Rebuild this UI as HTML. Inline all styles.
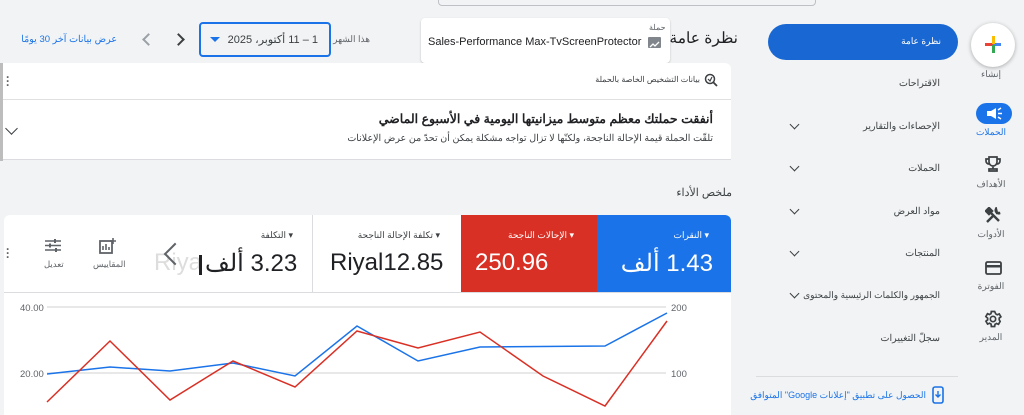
<!DOCTYPE html>
<html><head><meta charset="utf-8"><style>
*{margin:0;padding:0;box-sizing:border-box}
body{width:1024px;height:409px;overflow:hidden;background:#f1f3f4;font-family:"Liberation Sans","Noto Sans CJK SC",sans-serif;color:#202124;position:relative}
.a{position:absolute;white-space:nowrap}
.r{direction:rtl}
.nav{font-size:9.5px;color:#3c4043}
.rl{font-size:9px;color:#5f6368;text-align:center;width:60px;right:3px}
.chev{position:absolute;width:7px;height:7px;border-right:1.5px solid #3c4043;border-bottom:1.5px solid #3c4043;transform:rotate(45deg)}
</style></head><body>

<div class="a" style="left:438px;top:-10px;width:378px;height:16px;border:1px solid #bdc1c6;border-radius:4px;background:#f1f3f4"></div>

<div class="a" style="left:421px;top:18px;width:249px;height:45px;background:#fff;border-radius:4px;box-shadow:0 1px 2px rgba(0,0,0,.2)"></div>
<div class="a" style="left:649px;top:23px;font-size:8px;color:#5f6368">حملة</div>
<div class="a" style="left:428px;top:36px;font-size:11px;color:#202124">Sales-Performance Max-TvScreenProtector</div>
<div class="a" style="left:648px;top:37px;width:13px;height:11px;background:#80868b;border-radius:1px"><svg width="13" height="11"><path d="M2 8 L5 5 L7 7 L11 3" stroke="#fff" stroke-width="1.3" fill="none"/></svg></div>
<div class="a r" style="right:286px;top:29px;font-size:15.5px;color:#202124">نظرة عامة</div>

<div class="a r" style="right:654px;top:34px;font-size:9px;color:#5f6368">هذا الشهر</div>
<div class="a" style="left:199px;top:22px;width:132px;height:35px;border:2px solid #1a73e8;border-radius:4px"></div>
<div class="a r" style="right:706px;top:33px;font-size:11px;color:#3c4043">1 – 11 أكتوبر، 2025</div>
<div class="a" style="left:210px;top:37px;width:0;height:0;border-left:5px solid transparent;border-right:5px solid transparent;border-top:5px solid #1a73e8"></div>
<div class="a" style="left:174px;top:35px;width:9px;height:9px;border-right:2px solid #3c4043;border-top:2px solid #3c4043;transform:rotate(45deg)"></div>
<div class="a" style="left:144px;top:35px;width:9px;height:9px;border-left:2px solid #9aa0a6;border-bottom:2px solid #9aa0a6;transform:rotate(45deg)"></div>
<div class="a r" style="right:907px;top:34px;font-size:9.5px;color:#1a73e8">عرض بيانات آخر 30 يومًا</div>

<div class="a" style="left:0;top:63px;width:731px;height:97px;background:#fff;border-radius:0 6px 0 0;border-bottom:1px solid #dadce0"></div>
<div class="a" style="left:0;top:63px;width:3px;height:98px;background:#bdbdbd"></div>
<div class="a" style="left:3px;top:99px;width:728px;height:1px;background:#e0e0e0"></div>
<div class="a" style="left:6px;top:75px;font-size:12px;line-height:4px;color:#5f6368;font-weight:bold">·<br>·<br>·</div>
<svg class="a" style="left:704px;top:73px" width="15" height="15"><circle cx="6" cy="6" r="4.5" stroke="#3c4043" stroke-width="1.5" fill="none"/><path d="M9.5 9.5 L13 13" stroke="#3c4043" stroke-width="1.8"/><path d="M4 6 L6 8 L8 4" stroke="#3c4043" stroke-width="1.2" fill="none"/></svg>
<div class="a r" style="right:324px;top:75px;font-size:8px;color:#3c4043">بيانات التشخيص الخاصة بالحملة</div>
<div class="a r" style="right:311px;top:111px;font-size:12.5px;font-weight:bold;color:#202124">أنفقت حملتك معظم متوسط ميزانيتها اليومية في الأسبوع الماضي</div>
<div class="a r" style="right:311px;top:133px;font-size:9.5px;color:#3c4043">تلقّت الحملة قيمة الإحالة الناجحة، ولكنّها لا تزال تواجه مشكلة يمكن أن تحدّ من عرض الإعلانات</div>
<div class="chev" style="left:7px;top:124px;width:9px;height:9px"></div>

<div class="a r" style="right:292px;top:186px;font-size:11px;color:#3c4043">ملخص الأداء</div>

<div class="a" style="left:4px;top:215px;width:727px;height:200px;background:#fff;border-radius:6px 6px 0 0"></div>
<div class="a" style="left:597px;top:215px;width:134px;height:77px;background:#1a73e8;border-radius:0 6px 0 0"></div>
<div class="a" style="left:461px;top:215px;width:136px;height:77px;background:#d93025"></div>
<div class="a" style="left:312px;top:215px;width:1px;height:77px;background:#dadce0"></div>
<div class="a" style="left:4px;top:292px;width:727px;height:1px;background:#dadce0"></div>

<div class="a r" style="right:315px;top:230px;font-size:9px;color:#fff">▾ النقرات</div>
<div class="a r" style="right:311px;top:249px;font-size:24px;color:#fff">1.43 ألف</div>
<div class="a r" style="right:450px;top:230px;font-size:9px;color:#fff">▾ الإحالات الناجحة</div>
<div class="a" style="left:475px;top:249px;font-size:24px;color:#fff">250.96</div>
<div class="a r" style="right:584px;top:230px;font-size:9px;color:#3c4043">▾ تكلفة الإحالة الناجحة</div>
<div class="a" style="left:330px;top:249px;font-size:24px;color:#202124">Riyal12.85</div>
<div class="a r" style="right:731px;top:230px;font-size:9px;color:#3c4043">▾ التكلفة</div>
<div class="a" style="left:154px;top:249px;font-size:24px;color:#ddd">Riya</div>
<div class="a" style="left:205px;top:249px;font-size:24px;color:#202124" dir="rtl">3.23 ألف</div>
<div class="a" style="left:199px;top:255px;width:3px;height:20px;background:#202124"></div>
<div class="a" style="left:167px;top:246px;width:16px;height:16px;border-left:2.5px solid #5f6368;border-bottom:2.5px solid #5f6368;transform:rotate(45deg)"></div>
<svg class="a" style="left:99px;top:238px" width="18" height="16"><rect x="1" y="3" width="12" height="12" fill="none" stroke="#5f6368" stroke-width="1.8"/><path d="M4 12V8M7 12V6M10 12V9" stroke="#5f6368" stroke-width="1.6"/><path d="M14 0V6M11 3H17" stroke="#5f6368" stroke-width="1.6"/></svg>
<div class="a r" style="left:93px;top:259px;font-size:8.5px;color:#5f6368">المقاييس</div>
<svg class="a" style="left:45px;top:238px" width="16" height="15"><path d="M0 3H16M0 7.5H16M0 12H16" stroke="#5f6368" stroke-width="1.6"/><path d="M10 1V5M5 5.5V9.5M11 10V14" stroke="#5f6368" stroke-width="2"/></svg>
<div class="a r" style="left:44px;top:259px;font-size:8.5px;color:#5f6368">تعديل</div>
<div class="a" style="left:6px;top:247px;font-size:12px;line-height:4px;color:#5f6368;font-weight:bold">·<br>·<br>·</div>

<svg class="a" style="left:0;top:292px" width="731" height="117">
<line x1="47" y1="15" x2="666" y2="15" stroke="#e0e0e0" stroke-width="1.5"/>
<line x1="47" y1="81" x2="666" y2="81" stroke="#e0e0e0" stroke-width="1.5"/>
<text x="20" y="19" font-size="9.5" fill="#5f6368" font-family="Liberation Sans">40.00</text>
<text x="20" y="85" font-size="9.5" fill="#5f6368" font-family="Liberation Sans">20.00</text>
<text x="671" y="19" font-size="9.5" fill="#5f6368" font-family="Liberation Sans">200</text>
<text x="671" y="85" font-size="9.5" fill="#5f6368" font-family="Liberation Sans">100</text>
<polyline fill="none" stroke="#1a73e8" stroke-width="1.5" points="47,82 110,75 170,79 233,71 295,84 357,34 418,69 480,55 605,54 667,21"/>
<polyline fill="none" stroke="#d93025" stroke-width="1.5" points="47,110 110,49 170,108 233,69 295,95 357,39 418,56 480,40 543,84 605,114 667,29"/>
</svg>

<div class="a" style="left:768px;top:24px;width:190px;height:36px;background:#1967d2;border-radius:18px"></div>
<div class="a r" style="right:83px;top:36px;font-size:9px;color:#fff">نظرة عامة</div>
<div class="a r nav" style="right:84px;top:78px">الاقتراحات</div>
<div class="a r nav" style="right:84px;top:121px">الإحصاءات والتقارير</div>
<div class="a r nav" style="right:84px;top:163px">الحملات</div>
<div class="a r nav" style="right:84px;top:206px">مواد العرض</div>
<div class="a r nav" style="right:84px;top:248px">المنتجات</div>
<div class="a r nav" style="right:84px;top:290px;font-size:9px">الجمهور والكلمات الرئيسية والمحتوى</div>
<div class="a r nav" style="right:84px;top:333px">سجلّ التغييرات</div>
<div class="chev" style="left:791px;top:121px"></div>
<div class="chev" style="left:791px;top:163px"></div>
<div class="chev" style="left:791px;top:206px"></div>
<div class="chev" style="left:791px;top:248px"></div>
<div class="chev" style="left:791px;top:290px"></div>
<div class="a" style="left:756px;top:376px;width:202px;height:1px;background:#dadce0"></div>
<div class="a r" style="right:98px;top:390px;font-size:9px;color:#1a73e8">الحصول على تطبيق "إعلانات Google" المتوافق</div>
<svg class="a" style="left:932px;top:386px" width="12" height="18"><rect x="1" y="1" width="10" height="16" rx="2" fill="none" stroke="#1a73e8" stroke-width="1.6"/><path d="M6 5V11M3.5 8.5L6 11L8.5 8.5" stroke="#1a73e8" stroke-width="1.4" fill="none"/></svg>

<div class="a" style="left:971px;top:23px;width:44px;height:44px;border-radius:50%;background:#fff;box-shadow:0 1px 4px rgba(0,0,0,.3)"></div>
<div class="a" style="left:985px;top:43px;width:8px;height:3px;background:#ea4335"></div>
<div class="a" style="left:993px;top:43px;width:8px;height:3px;background:#4285f4"></div>
<div class="a" style="left:992px;top:36px;width:3px;height:8px;background:#fbbc04"></div>
<div class="a" style="left:992px;top:45px;width:3px;height:8px;background:#34a853"></div>
<div class="a r rl" style="top:69px">إنشاء</div>
<div class="a" style="left:976px;top:103px;width:36px;height:21px;background:#1a73e8;border-radius:11px"></div>
<svg class="a" style="left:985px;top:106px" width="18" height="15"><path d="M2 5H6L11 2V13L6 10H2Z" fill="#fff"/><path d="M13 4L16 2M13 7.5H17M13 11L16 13" stroke="#fff" stroke-width="1.5"/></svg>
<div class="a r rl" style="top:127px;color:#1a73e8">الحملات</div>
<svg class="a" style="left:985px;top:156px" width="16" height="17"><path d="M4 1H12V6A4 4 0 0 1 4 6Z M4 3H1V5A3 3 0 0 0 4 8M12 3H15V5A3 3 0 0 1 12 8M8 10V13M4 15H12V13H4Z" fill="none" stroke="#3c4043" stroke-width="1.7"/></svg>
<div class="a r rl" style="top:179px">الأهداف</div>
<svg class="a" style="left:985px;top:207px" width="17" height="17"><path d="M2 15L9 8M4 4L14 14M1 4L4 1L7 4L4 7Z M11 2A3 3 0 0 0 15 6L12 6Z" stroke="#3c4043" stroke-width="2.4" fill="#3c4043"/></svg>
<div class="a r rl" style="top:229px">الأدوات</div>
<svg class="a" style="left:985px;top:261px" width="17" height="14"><rect x="1" y="1" width="15" height="12" rx="1.5" fill="none" stroke="#3c4043" stroke-width="1.8"/><rect x="1" y="4" width="15" height="2.5" fill="#3c4043"/></svg>
<div class="a r rl" style="top:281px">الفوترة</div>
<svg class="a" style="left:983px;top:309px" width="20" height="20" viewBox="0 0 24 24"><path fill="none" stroke="#3c4043" stroke-width="2" d="M19.4 13a7.5 7.5 0 0 0 0-2l2.1-1.6-2-3.5-2.5 1a7 7 0 0 0-1.7-1L14 3h-4l-.4 2.6a7 7 0 0 0-1.7 1l-2.5-1-2 3.5L5.6 11a7.5 7.5 0 0 0 0 2l-2.1 1.6 2 3.5 2.5-1a7 7 0 0 0 1.7 1L10 21h4l.4-2.6a7 7 0 0 0 1.7-1l2.5 1 2-3.5z"/><circle cx="12" cy="12" r="3.2" fill="none" stroke="#3c4043" stroke-width="2"/></svg>
<div class="a r rl" style="top:332px">المدير</div>
</body></html>
